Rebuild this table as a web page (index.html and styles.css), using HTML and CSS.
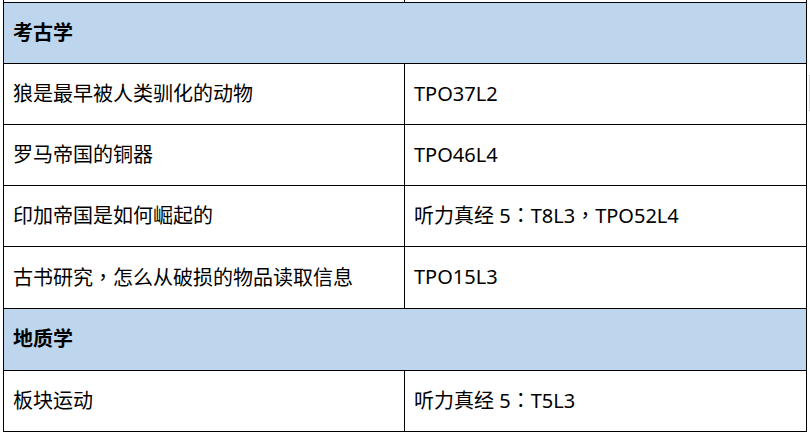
FILE: index.html
```html
<!DOCTYPE html>
<html lang="zh-CN">
<head>
<meta charset="utf-8">
<title>听力分类</title>
<link rel="stylesheet" href="styles.css">
</head>
<body>
<div class="page">
  <table class="topics">
    <colgroup><col class="c1"><col class="c2"></colgroup>
    <tr class="stub"><td></td><td></td></tr>
    <tr class="cat"><td colspan="2">考古学</td></tr>
    <tr><td>狼是最早被人类驯化的动物</td><td>TPO37L2</td></tr>
    <tr><td>罗马帝国的铜器</td><td>TPO46L4</td></tr>
    <tr><td>印加帝国是如何崛起的</td><td>听力真经 5<span class="p" lang="zh-TW">：</span>T8L3<span class="p" lang="zh-TW">，</span>TPO52L4</td></tr>
    <tr class="tall"><td>古书研究<span class="p" lang="zh-TW">，</span>怎么从破损的物品读取信息</td><td>TPO15L3</td></tr>
    <tr class="cat tall"><td colspan="2">地质学</td></tr>
    <tr><td>板块运动</td><td>听力真经 5<span class="p" lang="zh-TW">：</span>T5L3</td></tr>
  </table>
  <div class="edge"></div>
</div>
</body>
</html>
```

FILE: styles.css
```css
html, body {
  margin: 0;
  padding: 0;
  background: #ffffff;
}
body {
  width: 810px;
  height: 434px;
  overflow: hidden;
  font-family: "Noto Sans", "Noto Sans CJK SC", sans-serif;
  font-size: 20px;
  color: #000000;
}
.page {
  display: flex;
  align-items: flex-start;
  padding-left: 3px;
}
.topics {
  border-collapse: collapse;
  width: 803px;
  table-layout: fixed;
}
.topics .c1 { width: 401px; }
.topics .c2 { width: 402px; }
.topics td {
  border: 1px solid #000000;
  height: 61px;
  padding: 0 9px 0 9px;
  vertical-align: middle;
  line-height: 24px;
  white-space: nowrap;
  box-sizing: border-box;
}
.topics tr.stub td {
  height: 2px;
  border-top: none;
  padding: 0;
}
.topics tr.tall td {
  height: 62px;
}
.topics tr.cat td {
  background: #bdd6ee;
  font-weight: bold;
}
.p {
  font-family: "Noto Sans CJK TC", sans-serif;
}
.edge {
  width: 3px;
  height: 34px;
  margin-top: 75px;
  margin-left: 2px;
  border-top: 1px solid #c8c8c8;
  border-bottom: 1px solid #c8c8c8;
  border-left: 1px solid #d8d8d8;
  background: #f7f7f7;
}
```
